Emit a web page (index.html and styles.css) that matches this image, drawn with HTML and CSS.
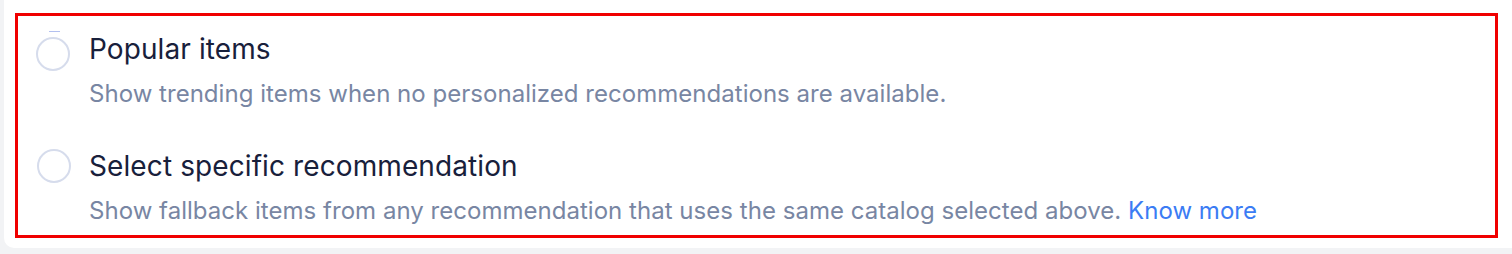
FILE: index.html
```html
<!DOCTYPE html>
<html lang="en">
<head>
    <meta charset="UTF-8">
    <meta name="viewport" content="width=device-width, initial-scale=1.0">
    <title>Fallback recommendations</title>
    <link rel="stylesheet" href="styles.css">
</head>
<body>
    <div class="card">
        <div class="fallback-box">
            <label class="option">
                <span class="radio radio-first"></span>
                <span class="option-text">
                    <span class="option-title">Popular items</span>
                    <span class="option-desc">Show trending items when no personalized recommendations are available.</span>
                </span>
            </label>
            <label class="option">
                <span class="radio"></span>
                <span class="option-text">
                    <span class="option-title">Select specific recommendation</span>
                    <span class="option-desc">Show fallback items from any recommendation that uses the same catalog selected above. <a href="#" class="link">Know more</a></span>
                </span>
            </label>
        </div>
    </div>
</body>
</html>
```
FILE: styles.css
```css
body {
    margin: 0;
    background: #f2f3f5;
    font-family: Inter, "Noto Sans", sans-serif;
}
.card {
    margin-left: 4px;
    background: #ffffff;
    border-bottom-left-radius: 10px;
    padding: 13px 14px 10px 11px;
}
.fallback-box {
    border: 3px solid #f00000;
    padding: 16px 0 9px 19px;
    display: flex;
    flex-direction: column;
    gap: 40px;
}
.option {
    display: flex;
    align-items: flex-start;
    gap: 18px;
    cursor: pointer;
}
.radio {
    flex: none;
    width: 34px;
    height: 34px;
    box-sizing: border-box;
    border: 2px solid #d6dcec;
    border-radius: 50%;
    background: #fff;
}
.radio-first {
    position: relative;
    margin-top: 5px;
    margin-left: -1px;
    margin-right: 1px;
}
.radio-first::before {
    content: "";
    position: absolute;
    top: -8px;
    left: 11px;
    width: 11px;
    height: 1px;
    background: #b3c0ef;
}
.option-text {
    display: flex;
    flex-direction: column;
    gap: 13px;
}
.option-title {
    font-size: 28px;
    line-height: 34px;
    letter-spacing: 0.1px;
    color: #18203b;
}
.option-desc {
    font-size: 24px;
    line-height: 30px;
    letter-spacing: 0.03px;
    color: #7886a3;
}
.link {
    color: #3b7cf4;
    text-decoration: none;
}
```
